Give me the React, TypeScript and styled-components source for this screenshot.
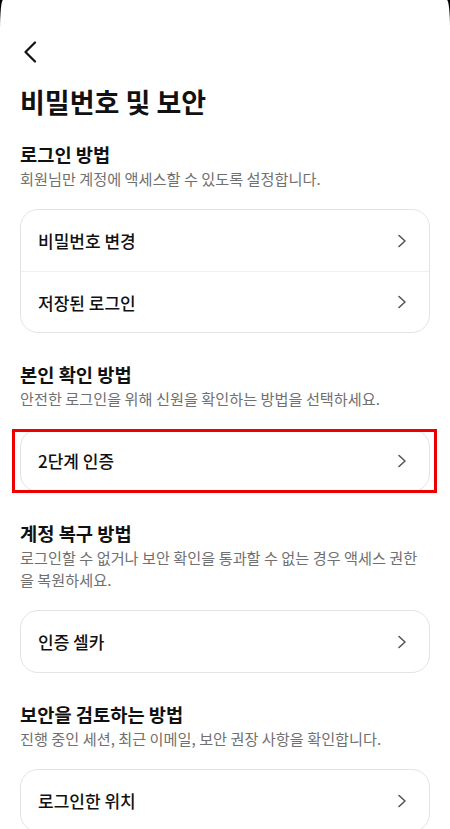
import React from "react";
import styled, { createGlobalStyle } from "styled-components";

const Global = createGlobalStyle`
  html, body { margin: 0; padding: 0; background: #000; }
  body { font-family: "Noto Sans CJK KR", "Noto Sans", sans-serif; }
  * { box-sizing: border-box; }
`;

const Screen = styled.div`
  background: #fff;
  height: 829px;
  border-top-left-radius: 3px 30px;
  border-top-right-radius: 3px 28px;
  padding: 30px 20px 0 20px;
  overflow: hidden;
`;

const BackButton = styled.button`
  display: flex;
  align-items: center;
  width: 44px;
  height: 44px;
  padding: 0 0 0 3px;
  margin: 0;
  border: none;
  background: none;
  color: #111;
`;

const Title = styled.h1`
  margin: 11px 0 0 0;
  font-size: 27px;
  line-height: 34px;
  font-weight: 700;
  color: #111;
  letter-spacing: 0;
`;

const Section = styled.section<{ $first?: boolean }>`
  margin-top: ${(p) => (p.$first ? "22px" : "28px")};
`;

const Heading = styled.h2`
  margin: 0;
  font-size: 18.7px;
  line-height: 25px;
  font-weight: 700;
  color: #111;
`;

const Desc = styled.p`
  margin: 1px 0 0 0;
  font-size: 15.2px;
  line-height: 22px;
  font-weight: 400;
  color: #707070;
`;

const CardWrap = styled.div`
  position: relative;
  margin-top: 20px;
`;

const Card = styled.div`
  border: 1px solid #e3e3e3;
  border-radius: 18px;
  background: #fff;
  overflow: hidden;
`;

const Row = styled.div`
  display: flex;
  align-items: center;
  justify-content: space-between;
  height: 61px;
  padding: 0 22px 0 17px;
  & + & {
    border-top: 1px solid #efefef;
  }
`;

const RowLabel = styled.span`
  font-size: 17px;
  font-weight: 500;
  color: #111;
`;

const Highlight = styled.div`
  position: absolute;
  top: 0;
  bottom: -1px;
  left: -8px;
  right: -7px;
  border: 3px solid #ee0000;
  pointer-events: none;
`;

const Chevron = () => (
  <svg width="10" height="14" viewBox="0 0 10 14" fill="none">
    <path d="M2 1.5 L8 7 L2 12.5" stroke="#555" strokeWidth="1.6" strokeLinecap="round" strokeLinejoin="round" />
  </svg>
);

const BackIcon = () => (
  <svg width="14" height="22" viewBox="0 0 14 22" fill="none">
    <path d="M12 1.5 L2.5 11 L12 20.5" stroke="#111" strokeWidth="2.2" strokeLinecap="round" strokeLinejoin="round" />
  </svg>
);

type Sec = { heading: string; desc: string; rows: string[]; highlight?: boolean };

const sections: Sec[] = [
  { heading: "로그인 방법", desc: "회원님만 계정에 액세스할 수 있도록 설정합니다.", rows: ["비밀번호 변경", "저장된 로그인"] },
  { heading: "본인 확인 방법", desc: "안전한 로그인을 위해 신원을 확인하는 방법을 선택하세요.", rows: ["2단계 인증"], highlight: true },
  { heading: "계정 복구 방법", desc: "로그인할 수 없거나 보안 확인을 통과할 수 없는 경우 액세스 권한을 복원하세요.", rows: ["인증 셀카"] },
  { heading: "보안을 검토하는 방법", desc: "진행 중인 세션, 최근 이메일, 보안 권장 사항을 확인합니다.", rows: ["로그인한 위치"] },
];

export default function App() {
  return (
    <>
      <Global />
      <Screen>
        <BackButton aria-label="뒤로">
          <BackIcon />
        </BackButton>
        <Title>비밀번호 및 보안</Title>
        {sections.map((s, i) => (
          <Section key={s.heading} $first={i === 0}>
            <Heading>{s.heading}</Heading>
            <Desc>{s.desc}</Desc>
            <CardWrap>
              <Card>
                {s.rows.map((r) => (
                  <Row key={r}>
                    <RowLabel>{r}</RowLabel>
                    <Chevron />
                  </Row>
                ))}
              </Card>
              {s.highlight && <Highlight />}
            </CardWrap>
          </Section>
        ))}
      </Screen>
    </>
  );
}
